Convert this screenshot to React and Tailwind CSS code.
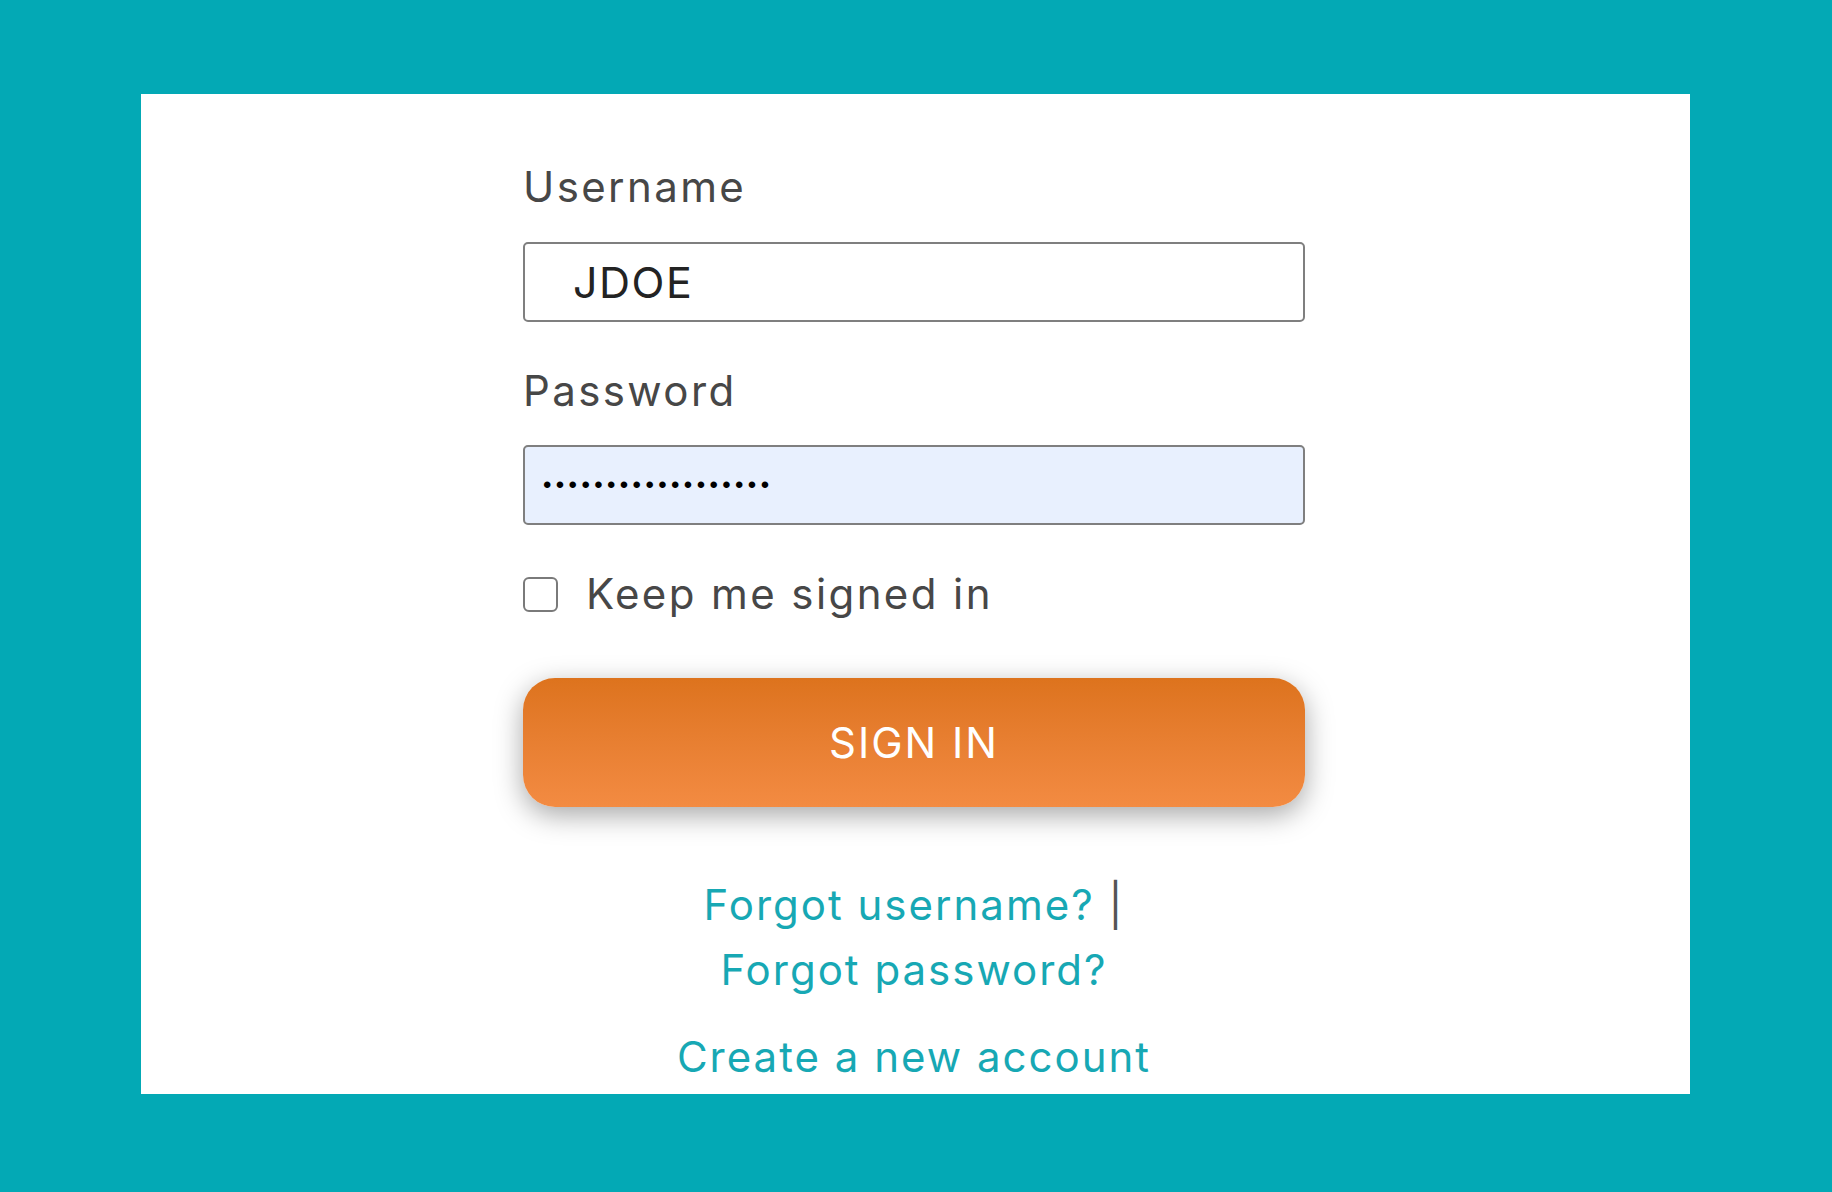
import React, { useState } from 'react';

const font = { fontFamily: 'Inter, "Open Sans", sans-serif' };

const App = () => {
  const [username, setUsername] = useState('JDOE');
  const [password, setPassword] = useState('••••••••••••••••••');
  const [keep, setKeep] = useState(false);

  return (
    <div className="min-h-[1192px] w-full bg-[#03a9b5] pt-[94px]" style={font}>
      {/* Panel */}
      <div className="ml-[141px] h-[1000px] w-[1549px] bg-white pt-[68px]">
        <div className="ml-[382px] flex w-[782px] flex-col">
          {/* Username */}
          <label className="text-[42px] leading-[50px] tracking-[2.4px] text-[#474747]">Username</label>
          <input
            value={username}
            onChange={(e) => setUsername(e.target.value)}
            className="mt-[30px] h-[80px] w-full rounded-[5px] border-2 border-[#7f7f7f] bg-white pl-[48px] text-[43px] tracking-[1.5px] text-[#232323] outline-none"
          />

          {/* Password */}
          <label className="mt-[44px] text-[42px] leading-[50px] tracking-[2.4px] text-[#474747]">Password</label>
          <input
            type="password"
            value={password}
            onChange={(e) => setPassword(e.target.value)}
            className="mt-[29px] h-[80px] w-full rounded-[5px] border-2 border-[#7f7f7f] bg-[#e8f0fe] pl-[18px] text-[24px] tracking-[4.4px] text-black outline-none"
            style={{ fontFamily: '"Liberation Sans", sans-serif' }}
          />

          {/* Keep me signed in */}
          <label className="mt-[44px] flex h-[50px] items-center gap-[28px]">
            <input
              type="checkbox"
              checked={keep}
              onChange={() => setKeep(!keep)}
              className="h-[35px] w-[35px] appearance-none rounded-[6px] border-2 border-[#7a7a7a] bg-white"
            />
            <span className="text-[42px] leading-[50px] tracking-[2.4px] text-[#474747]">Keep me signed in</span>
          </label>

          {/* Sign in */}
          <button className="mt-[59px] h-[129px] w-full rounded-[32px] bg-gradient-to-b from-[#dd731d] to-[#f38b42] text-[42px] tracking-[2px] text-white shadow-[0_8px_28px_rgba(0,0,0,0.35)]">
            SIGN IN
          </button>

          {/* Links */}
          <div className="mt-[65px] text-center text-[42px] leading-[65px] tracking-[2px] text-[#17a8b4]">
            <div>
              <a href="#">Forgot username?</a> <span className="text-[#555]">|</span>
            </div>
            <div>
              <a href="#">Forgot password?</a>
            </div>
            <div className="mt-[22px]">
              <a href="#">Create a new account</a>
            </div>
          </div>
        </div>
      </div>
    </div>
  );
};

export default App;
